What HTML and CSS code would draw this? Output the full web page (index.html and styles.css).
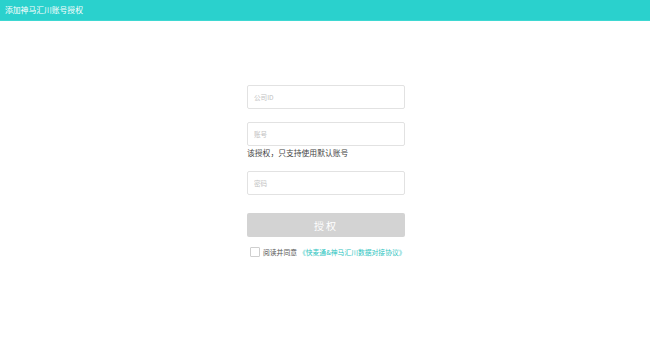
FILE: index.html
```html
<!DOCTYPE html>
<html lang="zh">
<head>
<meta charset="utf-8">
<link rel="stylesheet" href="styles.css">
</head>
<body>
<header class="topbar">添加神马汇川账号授权</header>
<main class="form">
  <input class="field" type="text" placeholder="公司ID">
  <div class="group">
    <input class="field" type="text" placeholder="账号">
    <p class="hint">该授权，只支持使用默认账号</p>
  </div>
  <input class="field" type="password" placeholder="密码">
  <button class="submit" type="button">授权</button>
  <label class="agree">
    <span class="box"></span>
    <span class="agree-text">阅读并同意</span>
    <a class="link">《快麦通&amp;神马汇川数据对接协议》</a>
  </label>
</main>
</body>
</html>
```
FILE: styles.css
```css
* { box-sizing: border-box; }
body {
  margin: 0;
  background: #fff;
  font-family: "Noto Sans CJK SC", "Noto Sans", sans-serif;
}
.topbar {
  height: 21px;
  background: #2ad1cd;
  border-bottom: 1px solid #3ed8d2;
  color: #fff;
  font-size: 7.8px;
  line-height: 20px;
  padding-left: 5px;
}
.form {
  width: 158px;
  margin: 64px 0 0 calc(50% - 78px);
  display: flex;
  flex-direction: column;
}
.field {
  display: block;
  width: 100%;
  height: 24px;
  border: 1px solid #e2e2e2;
  border-radius: 2px;
  padding: 0 6px;
  font-family: inherit;
  font-size: 6.6px;
  outline: none;
  margin: 0;
}
.field::placeholder { color: #c2c2c2; }
.group { margin-top: 13px; margin-bottom: 12px; }
.hint {
  margin: 0;
  font-size: 7.8px;
  line-height: 13px;
  color: #444;
}
.submit {
  margin-top: 18px;
  height: 24px;
  width: 100%;
  border: none;
  border-radius: 2px;
  background: #d3d3d3;
  color: #fff;
  font-family: inherit;
  font-size: 10px;
  letter-spacing: 2px;
  padding: 0;
}
.agree {
  display: flex;
  align-items: center;
  margin-top: 9px;
  padding-left: 3px;
  height: 12px;
  font-size: 6.8px;
  color: #555;
  white-space: nowrap;
}
.box {
  flex: none;
  width: 10px;
  height: 10px;
  border: 1px solid #cfcfcf;
  border-radius: 1px;
  margin-right: 3px;
  background: #fff;
}
.agree-text { flex: none; margin-right: 2px; }
.link { flex: none; color: #2ec5c1; }
```
